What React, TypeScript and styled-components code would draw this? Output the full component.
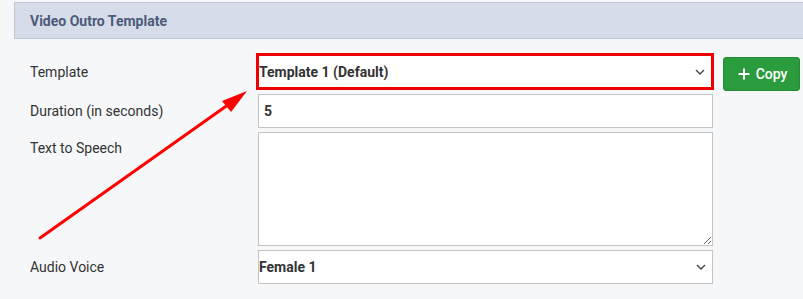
import React from "react";
import styled, { createGlobalStyle } from "styled-components";

const GlobalStyle = createGlobalStyle`
  html, body {
    margin: 0;
    padding: 0;
    background: #f6f7f9;
    font-family: Roboto, "Liberation Sans", Arial, sans-serif;
    color: #333;
  }
`;

const Page = styled.div`
  position: relative;
  width: 803px;
  height: 299px;
  overflow: hidden;
  padding-top: 2px;
  box-sizing: border-box;
`;

const Panel = styled.section`
  margin-left: 14px;
  width: 800px;
`;

const PanelHeader = styled.div`
  height: 37px;
  box-sizing: border-box;
  background: #d6dde8;
  border: 1px solid #bfc6d1;
  display: flex;
  align-items: center;
  padding-left: 15px;
  font-size: 14px;
  font-weight: 700;
  color: #4c5a7a;
`;

const Form = styled.div`
  display: grid;
  grid-template-columns: 218px 455px auto;
  column-gap: 10px;
  row-gap: 4px;
  padding: 14px 0 0 16px;
`;

const Label = styled.label<{ top?: boolean }>`
  font-size: 14px;
  color: #333;
  display: flex;
  align-items: ${({ top }) => (top ? "flex-start" : "center")};
  padding-top: ${({ top }) => (top ? "8px" : "0")};
`;

const Highlight = styled.div`
  border: 3px solid #ee0000;
  margin-left: -2px;
  margin-right: -1px;
  height: 37px;
  box-sizing: border-box;
  background: #fff;
  position: relative;
  display: flex;
  align-items: center;
`;

const Field = styled.div`
  position: relative;
  height: 34px;
  box-sizing: border-box;
  border: 1px solid #c4c4c4;
  background: #fff;
  display: flex;
  align-items: center;
`;

const SelectText = styled.span<{ inset?: number }>`
  font-size: 14px;
  font-weight: 700;
  color: #333;
  padding-left: ${({ inset = 0 }) => inset}px;
`;

const Chevron = styled.svg`
  position: absolute;
  right: 6px;
  top: 50%;
  margin-top: -3px;
`;

const TextArea = styled.textarea`
  height: 114px;
  box-sizing: border-box;
  border: 1px solid #c4c4c4;
  background: #fff;
  resize: vertical;
  margin: 0;
  font-family: inherit;
  font-size: 14px;
  outline: none;
`;

const CopyButton = styled.button`
  align-self: end;
  width: 77px;
  height: 34px;
  margin-bottom: -1px;
  border: 1px solid #238b35;
  border-radius: 3px;
  background: #2a9c3d;
  color: #fff;
  font-family: inherit;
  font-size: 14px;
  font-weight: 500;
  display: flex;
  align-items: center;
  justify-content: center;
  gap: 6px;
  padding: 0 0 0 2px;
`;

const Arrow = styled.svg`
  position: absolute;
  left: 0;
  top: 0;
  pointer-events: none;
`;

const ChevronIcon = () => (
  <Chevron width="10" height="6" viewBox="0 0 10 6">
    <path d="M1 1l4 4 4-4" fill="none" stroke="#444" strokeWidth="1.4" />
  </Chevron>
);

export default function App() {
  return (
    <Page>
      <GlobalStyle />
      <Panel>
        <PanelHeader>Video Outro Template</PanelHeader>
        <Form>
          <Label>Template</Label>
          <Highlight>
            <SelectText>Template 1 (Default)</SelectText>
            <ChevronIcon />
          </Highlight>
          <CopyButton>
            <svg width="12" height="12" viewBox="0 0 12 12">
              <path d="M6 0.5v11M0.5 6h11" stroke="#fff" strokeWidth="2" />
            </svg>
            Copy
          </CopyButton>

          <Label>Duration (in seconds)</Label>
          <Field>
            <SelectText inset={5}>5</SelectText>
          </Field>
          <span />

          <Label top>Text to Speech</Label>
          <TextArea />
          <span />

          <Label>Audio Voice</Label>
          <Field>
            <SelectText>Female 1</SelectText>
            <ChevronIcon />
          </Field>
          <span />
        </Form>
      </Panel>
      <Arrow width="803" height="299">
        <line x1="40" y1="238" x2="232" y2="102" stroke="#f00" strokeWidth="3" strokeLinecap="round" />
        <polygon points="247,91 222,101 231,112" fill="#f00" />
      </Arrow>
    </Page>
  );
}
